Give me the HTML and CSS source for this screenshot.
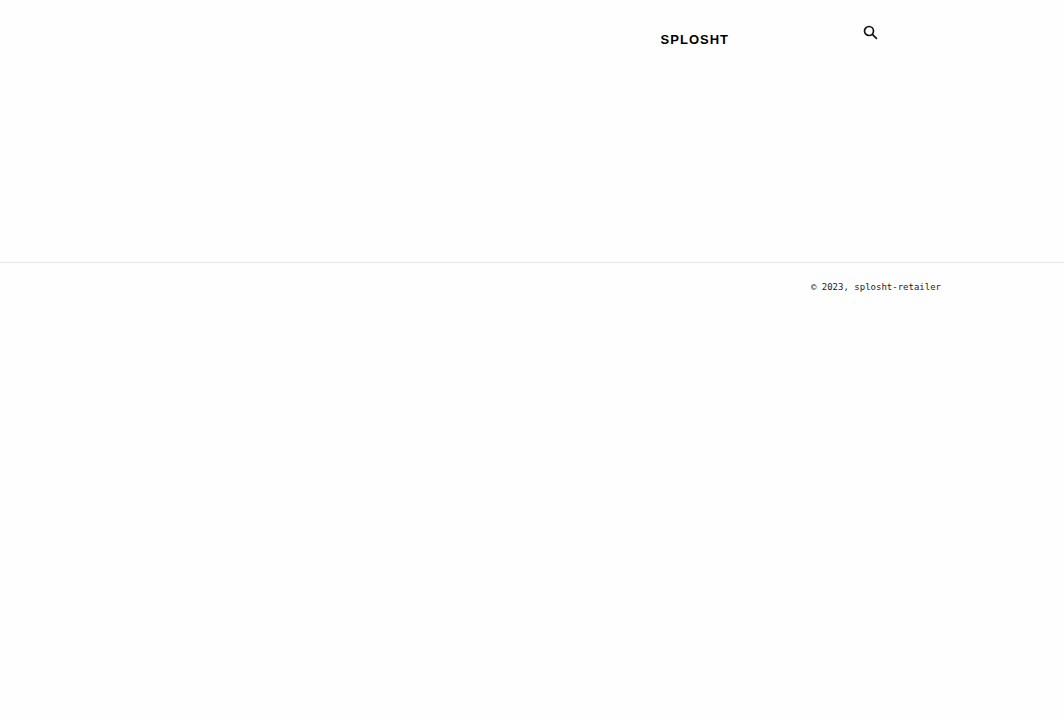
FILE: index.html
```
<!DOCTYPE html>
<html lang="en">
<head>
    <meta charset="UTF-8">
    <meta name="viewport" content="width=device-width, initial-scale=1.0">
    <title>SPLOSHT</title>
    <link rel="stylesheet" href="styles.css">
</head>
<body>
    <header class="header">
        <a href="/" class="header-logo">SPLOSHT</a>
        <button type="button" class="header-search" aria-label="Search">
            <svg class="icon-search" viewBox="0 0 14 14" aria-hidden="true">
                <circle cx="5" cy="5" r="4.5"/>
                <path d="M8.2 8.2L12.9 12.9"/>
            </svg>
        </button>
    </header>

    <footer class="footer">
        <small class="copyright">© 2023, <a href="/">splosht-retailer</a></small>
    </footer>
</body>
</html>
```

FILE: styles.css
```
body {
    font-family: "DejaVu Sans Mono", monospace;
    background-color: #fefefe;
    color: #222;
    margin: 0;
}
a {
    color: inherit;
    text-decoration: none;
}
.header {
    display: flex;
    justify-content: flex-end;
    align-items: flex-start;
    gap: 135px;
    padding: 26px 186px 0 0;
    min-height: 238px;
    box-sizing: border-box;
}
.header-logo {
    font-family: "Liberation Sans", Arial, sans-serif;
    font-size: 13px;
    font-weight: bold;
    line-height: 16px;
    letter-spacing: 1px;
    color: #000;
    padding-top: 6px;
}
.header-search {
    display: flex;
    padding: 0;
    border: none;
    background: none;
    cursor: pointer;
}
.icon-search {
    width: 14px;
    height: 14px;
    overflow: visible;
    fill: none;
    stroke: #111;
    stroke-width: 1.7;
}
.footer {
    margin-top: 24px;
    padding: 16px 123px 16px 0;
    border-top: 1px solid #e8e8e8;
    text-align: right;
}
.copyright {
    display: block;
    font-size: 9px;
    line-height: 16px;
}
```
